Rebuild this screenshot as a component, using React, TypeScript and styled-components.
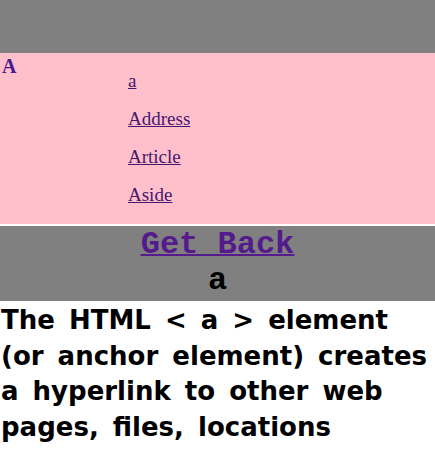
import React from "react";
import styled, { createGlobalStyle } from "styled-components";

const Global = createGlobalStyle`
  html, body { margin: 0; padding: 0; background: #ffffff; }
  body { font-family: "Liberation Serif", serif; }
`;

const TopBar = styled.header`
  height: 53px;
  background: #808080;
`;

const Index = styled.section`
  display: grid;
  grid-template-columns: 128px 1fr;
  height: 171px;
  background: #ffc0cb;
  border-bottom: 2px solid #ffffff;
`;

const Letter = styled.h3`
  margin: 2px 0 0 2px;
  font-family: "Liberation Serif", serif;
  font-size: 20px;
  font-weight: bold;
  line-height: 23px;
  color: #4b1a8b;
`;

const LinkList = styled.nav`
  display: flex;
  flex-direction: column;
  align-items: flex-start;
  gap: 16px;
  padding-top: 17px;
`;

const ItemLink = styled.a`
  font-family: "Liberation Serif", serif;
  font-size: 19px;
  line-height: 22px;
  color: #45186e;
  text-decoration: underline;
`;

const Footer = styled.footer`
  box-sizing: border-box;
  height: 75px;
  padding-top: 1px;
  background: #808080;
  text-align: center;
  font-family: "Liberation Mono", monospace;
  font-weight: bold;
  font-size: 32px;
`;

const BackLink = styled.a`
  display: block;
  width: max-content;
  margin: 0 auto;
  color: #551a8b;
  text-decoration: underline;
  text-decoration-thickness: 2px;
  line-height: 36px;
`;

const Tag = styled.div`
  color: #000000;
  line-height: 36px;
`;

const Description = styled.p`
  margin: 0;
  padding: 2px 0 0 1px;
  font-family: "DejaVu Sans", sans-serif;
  font-weight: bold;
  font-size: 26px;
  word-spacing: 5px;
  line-height: 35.5px;
  color: #000000;
`;

const items = ["a", "Address", "Article", "Aside"];

export default function App() {
  return (
    <>
      <Global />
      <TopBar />
      <Index>
        <Letter>A</Letter>
        <LinkList>
          {items.map((it) => (
            <ItemLink key={it} href="#">
              {it}
            </ItemLink>
          ))}
        </LinkList>
      </Index>
      <Footer>
        <BackLink href="#">Get Back</BackLink>
        <Tag>a</Tag>
      </Footer>
      <Description>
        The HTML &lt; a &gt; element (or anchor element) creates a hyperlink to
        other web pages, files, locations
      </Description>
    </>
  );
}
